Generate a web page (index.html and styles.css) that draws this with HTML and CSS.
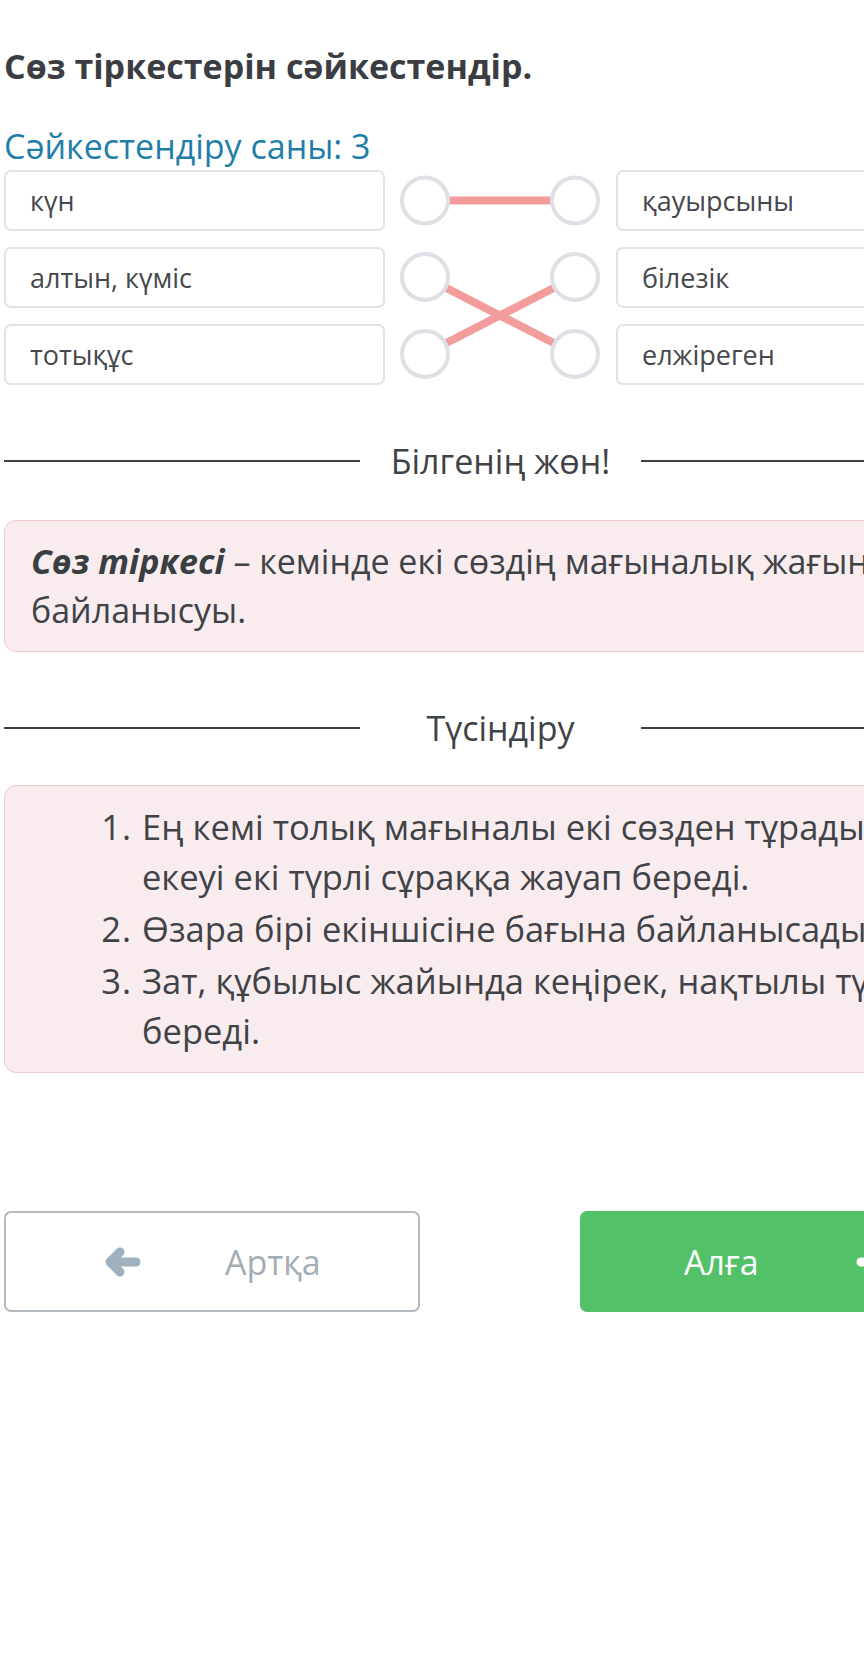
FILE: index.html
```html
<!DOCTYPE html>
<html lang="kk">
<head>
<meta charset="utf-8">
<title>Сөз тіркестерін сәйкестендір</title>
<link rel="stylesheet" href="styles.css">
</head>
<body>
<main class="page">
  <h1 class="title">Сөз тіркестерін сәйкестендір.</h1>
  <p class="count">Сәйкестендіру саны: 3</p>

  <section class="match">
    <div class="col col-left">
      <div class="card">күн</div>
      <div class="card">алтын, күміс</div>
      <div class="card">тотықұс</div>
    </div>
    <svg class="links" width="231" height="215" viewBox="0 0 231 215">
      <g class="link-lines">
        <line x1="40" y1="30.5" x2="190" y2="30.5"/>
        <line x1="40" y1="107" x2="190" y2="184"/>
        <line x1="40" y1="184" x2="190" y2="107"/>
      </g>
      <g class="dots">
        <circle cx="40" cy="30.5" r="23"/>
        <circle cx="40" cy="107" r="23"/>
        <circle cx="40" cy="184" r="23"/>
        <circle cx="190" cy="30.5" r="23"/>
        <circle cx="190" cy="107" r="23"/>
        <circle cx="190" cy="184" r="23"/>
      </g>
    </svg>
    <div class="col col-right">
      <div class="card">қауырсыны</div>
      <div class="card">білезік</div>
      <div class="card">елжіреген</div>
    </div>
  </section>

  <div class="divider divider-know"><span>Білгенің жөн!</span></div>
  <div class="note">
    <p><b><i>Сөз тіркесі</i></b> – кемінде екі сөздің мағыналық жағынан байланысуы.</p>
  </div>

  <div class="divider divider-explain"><span>Түсіндіру</span></div>
  <div class="note note-list">
    <ol>
      <li>Ең кемі толық мағыналы екі сөзден тұрады<br>екеуі екі түрлі сұраққа жауап береді.</li>
      <li>Өзара бірі екіншісіне бағына байланысады.</li>
      <li>Зат, құбылыс жайында кеңірек, нақтылы түсінік<br>береді.</li>
    </ol>
  </div>

  <nav class="nav">
    <button class="btn btn-back" type="button">
      <svg class="arrow" width="36" height="30" viewBox="0 0 36 30">
        <polyline points="15,5 5,15 15,25" />
        <line x1="7" y1="15" x2="31" y2="15" />
      </svg>
      <span class="btn-text">Артқа</span>
    </button>
    <button class="btn btn-next" type="button">
      <span class="btn-text">Алға</span>
      <svg class="arrow" width="36" height="30" viewBox="0 0 36 30">
        <polyline points="21,5 31,15 21,25" />
        <line x1="29" y1="15" x2="5" y2="15" />
      </svg>
    </button>
  </nav>
</main>
</body>
</html>
```

FILE: styles.css
```css
html, body {
  margin: 0;
  padding: 0;
  overflow: hidden;
  background: #ffffff;
}

body {
  font-family: "Open Sans", "Noto Sans", sans-serif;
  color: #3f4247;
}

.page {
  width: 993px;
  padding: 0 0 0 4px;
}

.title {
  margin: 46px 0 0;
  font-size: 34px;
  line-height: 40px;
  font-weight: 700;
  color: #3a3d42;
}

.count {
  margin: 40px 0 0;
  font-size: 34px;
  line-height: 40px;
  color: #1f7ea8;
}

.match {
  margin-top: 4px;
  display: grid;
  grid-template-columns: 381px 231px 381px;
}

.col {
  display: flex;
  flex-direction: column;
  gap: 16px;
}

.card {
  box-sizing: border-box;
  height: 61px;
  border: 2px solid #e1e4e7;
  border-radius: 7px;
  padding: 0 24px;
  display: flex;
  align-items: center;
  font-size: 27px;
  color: #45484d;
}

.links {
  display: block;
}

.link-lines line {
  stroke: #f29c9c;
  stroke-width: 8;
}

.dots circle {
  fill: #ffffff;
  stroke: #dde1e5;
  stroke-width: 4;
}

.divider {
  display: grid;
  grid-template-columns: 356px 1fr 356px;
  align-items: center;
  height: 40px;
  font-size: 34px;
  color: #3f4247;
}

.divider::before,
.divider::after {
  content: "";
  height: 2px;
  background: #3d4248;
}

.divider::before {
  grid-column: 1;
  grid-row: 1;
}

.divider::after {
  grid-column: 3;
  grid-row: 1;
}

.divider span {
  grid-column: 2;
  grid-row: 1;
  text-align: center;
  line-height: 40px;
  white-space: nowrap;
}

.divider-know {
  margin-top: 56px;
}

.divider-explain {
  margin-top: 56px;
}

.note {
  margin-top: 39px;
  box-sizing: border-box;
  border: 1px solid #f0c9c9;
  border-radius: 12px;
  background: #f9ecee;
  padding: 16px 26px;
  font-size: 34px;
  line-height: 49px;
  color: #3f4247;
}

.note p {
  margin: 0;
}

.note b {
  font-weight: 700;
  color: #3a3d42;
}

.note-list {
  margin-top: 37px;
  font-size: 34.5px;
  line-height: 50px;
}

.note-list ol {
  margin: 0;
  padding-left: 111px;
}

.note-list li::marker {
  letter-spacing: 1px;
}

.note-list li + li {
  margin-top: 2px;
}

.nav {
  margin-top: 138px;
  display: flex;
  gap: 160px;
}

.btn {
  box-sizing: border-box;
  width: 416px;
  height: 101px;
  border-radius: 7px;
  display: flex;
  align-items: center;
  font-family: "Open Sans", "Noto Sans", sans-serif;
  font-size: 34px;
  cursor: pointer;
}

.btn-back {
  background: #ffffff;
  border: 2px solid #b3babf;
  padding: 0 0 0 99px;
  color: #a3adb5;
}

.btn-back .btn-text {
  margin-left: 84px;
}

.btn-next {
  background: #52c168;
  border: 0;
  padding: 0 0 0 104px;
  color: #ffffff;
}

.btn-next .btn-text {
  margin-right: 97px;
}

.arrow {
  display: block;
  flex: none;
}

.arrow polyline,
.arrow line {
  fill: none;
  stroke-width: 9;
  stroke-linecap: round;
  stroke-linejoin: round;
}

.btn-back .arrow polyline,
.btn-back .arrow line {
  stroke: #9fb1bf;
}

.btn-next .arrow polyline,
.btn-next .arrow line {
  stroke: #ffffff;
}
```
